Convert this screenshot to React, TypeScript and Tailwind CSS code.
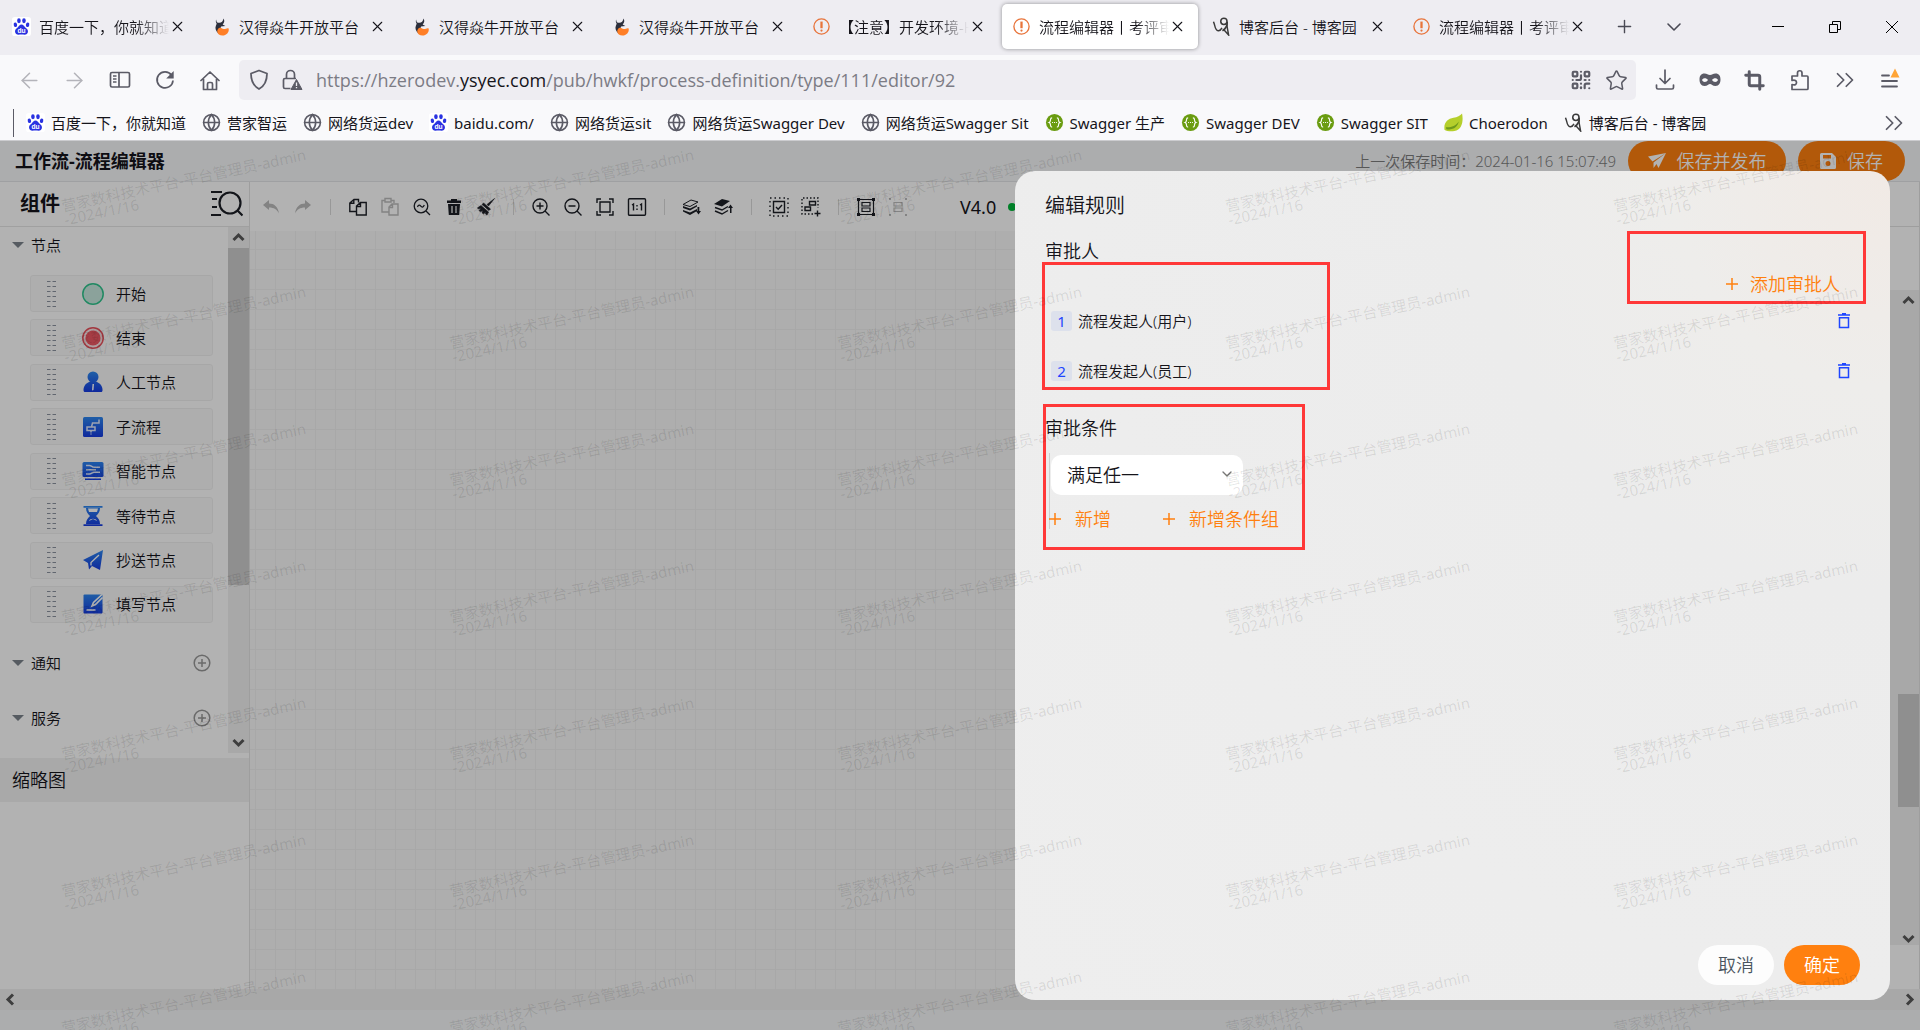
import React, { useState } from "react";
import {
  ArrowLeft,
  ArrowRight,
  ChevronDown,
  ChevronsRight,
  Crop,
  Globe,
  Plus,
  QrCode,
  Star,
  X,
} from "lucide-react";

type IconProps = { className?: string };

const BaiduIcon = () => (
  <svg viewBox="0 0 20 20" className="w-[19px] h-[19px] shrink-0">
    <rect width="20" height="20" rx="3" fill="#fff" />
    <g fill="#2932e1">
      <ellipse cx="7.3" cy="4" rx="1.9" ry="2.6" />
      <ellipse cx="12.6" cy="4" rx="1.9" ry="2.6" />
      <ellipse cx="3.6" cy="8.2" rx="1.8" ry="2.4" transform="rotate(-12 3.6 8.2)" />
      <ellipse cx="16.4" cy="8.2" rx="1.8" ry="2.4" transform="rotate(12 16.4 8.2)" />
      <path d="M10 8c2 0 2.600 1.600 3.800 2.800 1.400 1.300 3.200 2.200 3 4.700-.2 2.200-1.800 3.100-3.600 3.100-1.200 0-2-.2-3.200-.2s-2 .2-3.200.2c-1.800 0-3.400-.9-3.600-3.100-.2-2.500 1.600-3.400 3-4.700C7.400 9.600 8 8 10 8z" />
    </g>
    <text x="10" y="17" textAnchor="middle" fontSize="7" fontWeight="700" fill="#fff" fontFamily="Liberation Sans, sans-serif">
      du
    </text>
  </svg>
);

const BullIcon = () => (
  <svg viewBox="0 0 20 20" className="w-[19px] h-[19px] shrink-0">
    <path d="M4.500 2.500c-.2 2.500 1 3.600 3.200 3.500C10 5.800 11.800 4.500 12 1.500c1.500 2 1.200 4.500-.8 6.300l2.800 1.700-4.500.5L7 17.500C4 15 3 12 4 9.500c.4-1 1-1.800.8-2.800C4 5.500 3.700 4 4.500 2.500z" fill="#2b2f3c" />
    <path d="M7.500 11.500c1.500-1 3 .8 4.700 1.200 2 .4 3.500-1.700 5.300-.7 1 3.800-2.500 7.500-6.500 7.500-3 0-5.200-1.700-5.500-4.200-.1-1.800.8-3.200 2-3.800z" fill="#ff7f27" />
  </svg>
);

const AlertIcon = () => (
  <svg viewBox="0 0 20 20" className="w-[19px] h-[19px] shrink-0" fill="none" stroke="#e8743b">
    <circle cx="10" cy="10" r="8" strokeWidth="1.400" />
    <path d="M10 4.800v7" strokeWidth="2.400" />
    <circle cx="10" cy="14.300" r="1.200" fill="#e8743b" stroke="none" />
  </svg>
);

const BlogIcon = () => (
  <svg viewBox="0 0 20 20" className="w-[19px] h-[19px] shrink-0" fill="none" stroke="#3a3a3a">
    <circle cx="12.500" cy="4.500" r="3.300" strokeWidth="1.600" />
    <path d="M16 5c.4 4-1 7-5 9.500" strokeWidth="1.700" />
    <path d="M15.500 8l2 11-5-5.500" strokeWidth="1.500" />
    <path d="M1.500 5c2 3 1 9 5 9.500 2 .2 3-1 4-3" strokeWidth="1.500" />
  </svg>
);

const SwaggerIcon = () => (
  <svg viewBox="0 0 20 20" className="w-[19px] h-[19px] shrink-0">
    <circle cx="10" cy="10" r="9" fill="#6a9c10" />
    <path d="M7.500 5.200c-1.600 0-1.700.7-1.700 2 0 1.500 0 2.300-1.500 2.800 1.500.5 1.500 1.300 1.500 2.800 0 1.300.1 2 1.700 2M12.500 5.200c1.600 0 1.700.7 1.700 2 0 1.500 0 2.300 1.500 2.800-1.500.5-1.500 1.300-1.500 2.800 0 1.300-.1 2-1.700 2" fill="none" stroke="#fff" strokeWidth="1.200" />
    <path d="M7.500 10h1M9.500 10h1M11.500 10h1" stroke="#fff" strokeWidth="1.200" />
  </svg>
);

const LeafIcon = () => (
  <svg viewBox="0 0 20 20" className="w-[19px] h-[19px] shrink-0">
    <path d="M19 .5c1.500 7 .5 17-8 18.500-4 .8-8.500 0-10.500-1.500C-.5 10 4 6 10 5c4-.6 7-2 9-4.500z" fill="#b5cf2b" />
    <path d="M2 15c5 .5 10-1 13.500-6-1 6-6.500 9.500-13 8z" fill="#6f9a1c" />
  </svg>
);

const WorldIcon = () => <Globe size={19} strokeWidth={2} className="shrink-0 text-[#5b5b66]" />;

const tabs = [
  { icon: BaiduIcon, title: "百度一下，你就知道", fade: true },
  { icon: BullIcon, title: "汉得焱牛开放平台" },
  { icon: BullIcon, title: "汉得焱牛开放平台" },
  { icon: BullIcon, title: "汉得焱牛开放平台" },
  { icon: AlertIcon, title: "【注意】开发环境-H", fade: true },
  { icon: AlertIcon, title: "流程编辑器丨考评审批", fade: true, active: true },
  { icon: BlogIcon, title: "博客后台 - 博客园" },
  { icon: AlertIcon, title: "流程编辑器丨考评审批", fade: true },
];

const bookmarks = [
  { icon: BaiduIcon, title: "百度一下，你就知道" },
  { icon: WorldIcon, title: "营家智运" },
  { icon: WorldIcon, title: "网络货运dev" },
  { icon: BaiduIcon, title: "baidu.com/" },
  { icon: WorldIcon, title: "网络货运sit" },
  { icon: WorldIcon, title: "网络货运Swagger Dev" },
  { icon: WorldIcon, title: "网络货运Swagger Sit" },
  { icon: SwaggerIcon, title: "Swagger 生产" },
  { icon: SwaggerIcon, title: "Swagger DEV" },
  { icon: SwaggerIcon, title: "Swagger SIT" },
  { icon: LeafIcon, title: "Choerodon" },
  { icon: BlogIcon, title: "博客后台 - 博客园" },
];

const TabBar = () => (
  <div className="flex h-[55px] bg-[#eeedf2] pt-1 pb-[6px]">
    {tabs.map((tab, i) => (
      <div key={i} className="w-[200px] px-[2px] shrink">
        <div
          className={
            tab.active
              ? "flex items-center h-full pl-[10px] pr-3 rounded-[5px] bg-white shadow-[0_0_4px_rgba(0,0,0,0.4)]"
              : "flex items-center h-full pl-[10px] pr-3"
          }
        >
          <tab.icon />
          <span
            className={
              tab.fade
                ? "ml-2 flex-1 overflow-hidden whitespace-nowrap [mask-image:linear-gradient(to_right,black_75%,transparent)]"
                : "ml-2 flex-1 overflow-hidden whitespace-nowrap"
            }
          >
            {tab.title}
          </span>
          <button aria-label="关闭标签页" className="shrink-0">
            <X size={17} strokeWidth={1.500} />
          </button>
        </div>
      </div>
    ))}
    <div className="flex flex-1 items-center text-[#4a4a55]">
      <button aria-label="新标签页" className="w-12 flex justify-center">
        <Plus size={21} strokeWidth={1.600} />
      </button>
      <button aria-label="标签列表" className="w-[52px] flex justify-center">
        <ChevronDown size={24} strokeWidth={1.600} />
      </button>
    </div>
    <div className="flex items-center text-black">
      <button aria-label="最小化" className="w-[57px] flex justify-center">
        <svg width="14" height="14" stroke="currentColor"><path d="M1 6.500h12" /></svg>
      </button>
      <button aria-label="还原" className="w-[57px] flex justify-center">
        <svg width="14" height="14" stroke="currentColor" fill="none">
          <path d="M1.500 4.500h8v8h-8zM4.500 4.500v-3h8v8h-3" />
        </svg>
      </button>
      <button aria-label="关闭" className="w-[57px] flex justify-center">
        <svg width="14" height="14" stroke="currentColor"><path d="M1 1l12 12M13 1L1 13" /></svg>
      </button>
    </div>
  </div>
);

const NavButton = ({ label, children }: { label: string; children: React.ReactNode }) => (
  <button aria-label={label} className="w-[45px] flex justify-center shrink-0">
    {children}
  </button>
);

const NavBar = () => (
  <div className="flex items-center h-[50px] bg-[#f9f9fb] pl-[7px] pr-2 text-[#5b5b66]">
    <div className="flex text-[#b4b4ba]">
      <NavButton label="后退"><ArrowLeft size={25} strokeWidth={1.500} /></NavButton>
      <NavButton label="前进"><ArrowRight size={25} strokeWidth={1.500} /></NavButton>
    </div>
    <NavButton label="侧栏">
      <svg width="22" height="20" viewBox="0 0 22 20" fill="none" stroke="currentColor" strokeWidth="1.700">
        <rect x="1.500" y="2.500" width="19" height="14.500" rx="1.500" />
        <path d="M10 2.500V17M4 6h3.500M4 9h3.500M4 12h3.500" />
      </svg>
    </NavButton>
    <NavButton label="刷新">
      <svg width="20" height="20" viewBox="0 0 20 20" fill="none" stroke="currentColor" strokeWidth="1.700">
        <path d="M16.500 5.200A8 8 0 1 0 18 10.500" />
        <path d="M18.700 1v7.500h-7.500z" fill="currentColor" stroke="none" />
      </svg>
    </NavButton>
    <NavButton label="主页">
      <svg width="20" height="21" viewBox="0 0 20 21" fill="none" stroke="currentColor" strokeWidth="1.700" strokeLinejoin="round" strokeLinecap="round">
        <path d="M1 10.500L10 2l9 8.500M3.500 9v10.500h13V9M7.500 19v-5a1.500 1.500 0 0 1 1.500-1.500h2a1.500 1.500 0 0 1 1.500 1.500v5" />
      </svg>
    </NavButton>
    <div className="flex flex-1 items-center h-10 ml-[7px] mr-[6px] rounded-[5px] bg-[#eeedf2] pl-[10px] pr-2">
      <svg width="20" height="22" viewBox="0 0 20 22" fill="none" stroke="currentColor" strokeWidth="1.800" strokeLinejoin="round">
        <path d="M10 1.500l8 3c0 7-1.500 12-8 15.500C3.500 16.500 2 11.500 2 4.500z" />
      </svg>
      <svg width="22" height="22" viewBox="0 0 22 22" fill="none" stroke="currentColor" strokeWidth="1.700" className="ml-3">
        <path d="M5.500 9V5.500a4 4 0 0 1 8 0V9M9.500 19.500H4A1.500 1.500 0 0 1 2.500 18v-7A1.500 1.500 0 0 1 4 9.500h11" />
        <path d="M15.500 10.500l5.500 10H10z" fill="currentColor" stroke="currentColor" strokeLinejoin="round" strokeWidth="1" />
        <path d="M15.500 13.500v3.500M15.500 18v1.300" stroke="#eeedf2" strokeWidth="1.300" />
      </svg>
      <div className="flex-1 ml-[13px] font-['Open_Sans','Noto_Sans_CJK_SC',sans-serif] font-normal text-lg text-[#7c7c85]">
        https://hzerodev.<span className="text-[#15141a]">ysyec.com</span>/pub/hwkf/process-definition/type/111/editor/92
      </div>
      <QrCode size={22} strokeWidth={2.400} />
      <Star size={23} strokeWidth={1.600} className="ml-[13px]" />
    </div>
    <NavButton label="下载">
      <svg width="20" height="22" viewBox="0 0 20 22" fill="none" stroke="currentColor" strokeWidth="1.700" strokeLinecap="round" strokeLinejoin="round">
        <path d="M10 1v13M5 9.500l5 5 5-5M1.500 16v2.500A1.500 1.500 0 0 0 3 20h14a1.500 1.500 0 0 0 1.500-1.500V16" />
      </svg>
    </NavButton>
    <NavButton label="隐私">
      <svg width="22" height="14" viewBox="0 0 22 14">
        <path fillRule="evenodd" fill="currentColor" d="M5.500.5c2.500 0 3.500 1.500 5.500 1.500S14 .5 16.500.5C20 .5 21.500 3 21.500 6.500S20 13 16.500 13c-3 0-4-2-5.500-2s-2.500 2-5.500 2C2 13 .5 10 .5 6.500S2 .5 5.500.5zM3 7c1 2.500 4.500 2.500 6 0C7.500 4.500 4 4.500 3 7zm10 0c1.500 2.500 5 2.500 6 0-1-2.500-4.500-2.500-6 0z" />
      </svg>
    </NavButton>
    <NavButton label="截图"><Crop size={21} strokeWidth={3.400} /></NavButton>
    <NavButton label="扩展">
      <svg width="20" height="22" viewBox="0 0 20 22" fill="none" stroke="currentColor" strokeWidth="1.700" strokeLinejoin="round">
        <path d="M2 20.500v-5c3.500 1 4.500-.5 4.500-2S5 10.500 2 11.500V7h5.500V4a2.200 2.200 0 0 1 4.500 0v3H17a1 1 0 0 1 1 1v11.500a1 1 0 0 1-1 1z" />
      </svg>
    </NavButton>
    <NavButton label="更多工具"><ChevronsRight size={30} strokeWidth={1.400} /></NavButton>
    <NavButton label="菜单">
      <svg width="22" height="24" viewBox="0 0 22 24" fill="none" stroke="currentColor" strokeWidth="1.800" strokeLinecap="round">
        <path d="M3 7.500h7M3 13h15M3 18.500h15" />
        <path d="M16 .5l4.500 9h-9z" fill="#ffa436" stroke="none" />
      </svg>
    </NavButton>
  </div>
);

const BookmarkBar = () => (
  <div className="flex items-center h-9 bg-[#f9f9fb] border-b border-[#cccccf] pl-[13px] pr-[11px]">
    <div className="w-px h-7 bg-[#5b5b66] mr-3" />
    <nav className="flex flex-1 gap-4 font-normal">
      {bookmarks.map((item, i) => (
        <a key={i} href="#" className="flex items-center gap-[6px] whitespace-nowrap">
          <item.icon />
          {item.title}
        </a>
      ))}
    </nav>
    <ChevronsRight size={30} strokeWidth={1.400} className="text-[#5b5b66]" />
  </div>
);

const PageHeader = () => (
  <header className="flex items-center h-[41px] border-b border-[#e4e6e8] px-[15px]">
    <h1 className="flex-1 text-lg font-bold">工作流-流程编辑器</h1>
    <span className="text-[#7d7d7d]">上一次保存时间：2024-01-16 15:07:49</span>
    <button className="flex items-center justify-center gap-[11px] w-[158px] h-10 ml-3 rounded-full bg-[#ff800f] text-lg text-white">
      <svg width="18" height="16" viewBox="0 0 18 16" fill="currentColor">
        <path d="M0 3.500L18 0 4.500 8.500zM5.500 9.500L18 0l-7.500 15-2-4-3 4z" />
      </svg>
      保存并发布
    </button>
    <button className="flex items-center justify-center gap-[11px] w-[107px] h-10 ml-3 rounded-full bg-[#ff800f] text-lg text-white">
      <svg width="16" height="16" viewBox="0 0 16 16" fill="currentColor" fillRule="evenodd">
        <path d="M1.500 0H12l4 4v10.500a1.500 1.500 0 0 1-1.500 1.500h-13A1.500 1.500 0 0 1 0 14.500v-13A1.500 1.500 0 0 1 1.500 0zM3 2v3.500h8V2zm5 6a2.500 2.500 0 1 0 0 5 2.500 2.500 0 0 0 0-5z" />
      </svg>
      保存
    </button>
  </header>
);

const StartIcon = () => (
  <svg width="22" height="22" viewBox="0 0 22 22">
    <circle cx="11" cy="11" r="10.200" fill="#c8e9de" stroke="#2fc48d" strokeWidth="1.500" />
  </svg>
);

const EndIcon = () => (
  <svg width="22" height="22" viewBox="0 0 22 22">
    <circle cx="11" cy="11" r="10.200" fill="#fbe4e6" stroke="#e8505b" strokeWidth="1.500" />
    <circle cx="11" cy="11" r="7.600" fill="#ee5864" />
  </svg>
);

const BlueIcon = ({ children }: { children: React.ReactNode }) => (
  <svg width="22" height="22" viewBox="0 0 22 22" fill="url(#blue)">
    <defs>
      <linearGradient id="blue" x1="0" y1="0" x2="0" y2="22" gradientUnits="userSpaceOnUse">
        <stop offset="0" stopColor="#2e8bf0" />
        <stop offset="1" stopColor="#1537e0" />
      </linearGradient>
    </defs>
    {children}
  </svg>
);

const nodes = [
  { title: "开始", icon: <StartIcon /> },
  { title: "结束", icon: <EndIcon /> },
  {
    title: "人工节点",
    icon: (
      <BlueIcon>
        <circle cx="11" cy="6" r="5.500" />
        <path d="M8 10.500h6c4 1.500 6.500 4.500 6.500 8.500 0 1.500-.5 2-1.500 2H3c-1 0-1.500-.5-1.500-2 0-4 2.500-7 6.500-8.500z" />
        <path d="M10.500 13h1.500l-.5 6-1.500.5z" fill="#fff" />
      </BlueIcon>
    ),
  },
  {
    title: "子流程",
    icon: (
      <BlueIcon>
        <rect x="1" y="1" width="20" height="20" rx="1.500" />
        <path d="M17 3.500V7h-6.500l-1 4M5 11h8v3.500H5zM9 15v1.500M9 17.500v1" fill="none" stroke="#dfe9ff" strokeWidth="1.500" />
      </BlueIcon>
    ),
  },
  {
    title: "智能节点",
    icon: (
      <BlueIcon>
        <rect x="0.500" y="2" width="21" height="15" rx="1.500" />
        <path d="M3 18.500h16v1.500H3z" />
        <path d="M4 5.500h3.500c2 0 2.500 1.800 4.500 1.800h6M4 9.700h10M4 14h3.500c2 0 2.500-1.800 4.500-1.800h6" fill="none" stroke="#dfe9ff" strokeWidth="1.500" />
      </BlueIcon>
    ),
  },
  {
    title: "等待节点",
    icon: (
      <BlueIcon>
        <path d="M1.500 1h19v1.800h-19zM1.500 19.200h19V21h-19z" />
        <path d="M4 3h14c0 4-2 6-4 8 2 2 4 4 4 8H4c0-4 2-6 4-8-2-2-4-4-4-8z" />
        <path d="M6 3.500h10l-1 3.500H7zM7 16c1-3 7-3 8 0l-4-2z" fill="#fff" />
      </BlueIcon>
    ),
  },
  {
    title: "抄送节点",
    icon: (
      <BlueIcon>
        <path d="M21 1L1 11l5 3 1 6.500 3-3.500 8 4z" />
        <path d="M17 6l-8 7.500v3" fill="none" stroke="#fff" strokeWidth="1.300" />
      </BlueIcon>
    ),
  },
  {
    title: "填写节点",
    icon: (
      <BlueIcon>
        <rect x="1.500" y="1.500" width="19" height="19" rx="1" />
        <path d="M20 1.500l-8.500 8-1.500 3.500 3.500-1.500 7-7M4.500 17h9" fill="none" stroke="#fff" strokeWidth="1.600" />
      </BlueIcon>
    ),
  },
];

const ScrollArrow = ({ className = "" }: IconProps) => (
  <svg width="13" height="13" viewBox="0 0 13 13" fill="none" stroke="#5a5a5a" strokeWidth="3" className={className}>
    <path d="M1.500 9l5-5 5 5" />
  </svg>
);

const GroupTitle = ({ title }: { title: string }) => (
  <button className="flex items-center text-left">
    <span className="border-x-[6px] border-t-[6px] border-x-transparent border-t-[#7b838c] mr-[7px]" />
    {title}
  </button>
);

const AddIcon = () => (
  <button aria-label="添加">
    <svg width="18" height="18" viewBox="0 0 18 18" fill="none" stroke="#999" strokeWidth="1.500">
      <circle cx="9" cy="9" r="7.800" />
      <path d="M9 5v8M5 9h8" />
    </svg>
  </button>
);

const Sidebar = () => (
  <aside className="flex flex-col w-[250px] shrink-0 border-r border-[#e2e2e2] bg-white">
    <div className="flex items-center justify-between h-[45px] border-b border-[#e6e6e6] pl-5 pr-[6px]">
      <h2 className="text-xl leading-7 font-bold">组件</h2>
      <button aria-label="搜索组件">
        <svg width="32" height="28" viewBox="0 0 32 28" fill="none" stroke="#1c1f26" strokeWidth="2.200">
          <circle cx="19" cy="13" r="10.500" />
          <path d="M26.500 20.500l5 5M0 2h11M1 9h5M1 17h5M0 25h10" />
        </svg>
      </button>
    </div>
    <div className="flex">
      <div className="flex-1 pb-[13px]">
        <div className="flex items-center h-9 pl-3">
          <GroupTitle title="节点" />
        </div>
        <div className="flex flex-col justify-between h-[348px] my-3 ml-[30px] mr-[15px]">
          {nodes.map((node) => (
            <div key={node.title} className="flex items-center h-[37px] rounded-[3px] border border-[#f0f0f0] bg-[#fafafa] pl-4">
              <svg width="9" height="26" viewBox="0 0 9 26" stroke="#8b93a0" strokeWidth="1" className="mr-[26px]">
                <path d="M0 .5h9M0 5.500h9M0 10.500h9M0 15.500h9M0 20.500h9M0 25.500h9" strokeDasharray="3.500 2" />
              </svg>
              {node.icon}
              <span className="ml-3">{node.title}</span>
            </div>
          ))}
        </div>
        {["通知", "服务"].map((title) => (
          <div key={title} className="flex items-center justify-between h-[55px] pl-3 pr-[17px]">
            <GroupTitle title={title} />
            <AddIcon />
          </div>
        ))}
      </div>
      <div className="flex flex-col items-center w-[21px] mb-[5px] bg-[#f1f1f1]">
        <ScrollArrow className="my-1" />
        <div className="w-full h-[64%] bg-[#cdcdcd]" />
        <ScrollArrow className="mt-auto mb-1 rotate-180" />
      </div>
    </div>
    <h3 className="h-11 bg-[#f2f2f2] pl-3 text-lg leading-[44px]">缩略图</h3>
  </aside>
);

const ToolIcon = ({ label, muted, children }: { label: string; muted?: boolean; children: React.ReactNode }) => (
  <button aria-label={label} className={muted ? "w-8 flex justify-center text-[#bcbcbc]" : "w-8 flex justify-center text-[#1c1f26]"}>
    <svg width="20" height="20" viewBox="0 0 20 20" fill="none" stroke="currentColor" strokeWidth="1.400">
      {children}
    </svg>
  </button>
);

const Divider = () => <span className="w-px h-4 mx-[11px] bg-[#dadada]" />;

const Toolbar = () => (
  <div className="flex items-center h-[49px] bg-white pl-[5px]">
    <ToolIcon label="撤销" muted>
      <path d="M2 8l6-5v3.500c5 0 9 3 10 10-2-4-5-6-10-6V13z" fill="currentColor" stroke="none" />
    </ToolIcon>
    <ToolIcon label="重做" muted>
      <path d="M18 8l-6-5v3.500c-5 0-9 3-10 10 2-4 5-6 10-6V13z" fill="currentColor" stroke="none" />
    </ToolIcon>
    <Divider />
    <ToolIcon label="复制">
      <path d="M8 14.500H1.800V6L6 2.500h4.500v3M5.800 2.500V6.300H2M8.500 18V9l4-3.500h5.700V18zM12.500 5.500v4H9" />
    </ToolIcon>
    <ToolIcon label="粘贴" muted>
      <path d="M8.500 15H2V3.500h3M11 3.500h3V6M5 1.500h6v3.500H5zM9 18V10l3-3h6v11zM12.500 7.500v3H9.500" />
    </ToolIcon>
    <ToolIcon label="查找">
      <circle cx="9" cy="9" r="6.800" strokeWidth="1.300" />
      <path d="M14 14l4 4M5.500 10c1-2.500 2.300-2 3.300-.8s2.300 1.500 3.500-1.200" strokeWidth="1.300" />
    </ToolIcon>
    <ToolIcon label="删除">
      <path d="M3 3.500h4V2h6v1.500h4V6H3zM4 7h12l-.8 11H4.800z" fill="currentColor" stroke="none" />
      <path d="M8 9v7M12 9v7" stroke="#fff" strokeWidth="1.200" />
    </ToolIcon>
    <ToolIcon label="清空">
      <path d="M18.500 1.500L11 7.500l1.500 1.500zM7.500 6l7 6-1.500 1.500L6 7.500zM5 8.500l7.500 6.500-1.500 3-1.500-1 .2-2L7.500 17 6 15.800l1-2.300-2.500 1.300L3 13.500l2-2-3 .3-.5-1z" fill="currentColor" strokeWidth=".6" />
    </ToolIcon>
    <Divider />
    <ToolIcon label="放大">
      <circle cx="9" cy="9" r="7" />
      <path d="M14 14l4.500 4.500M9 5.500v7M5.500 9h7" />
    </ToolIcon>
    <ToolIcon label="缩小">
      <circle cx="9" cy="9" r="7" />
      <path d="M14 14l4.500 4.500M5.500 9h7" />
    </ToolIcon>
    <ToolIcon label="适应画布">
      <path d="M2 6V2h4M14 2h4v4M18 14v4h-4M6 18H2v-4M5 5h10v10H5z" />
    </ToolIcon>
    <ToolIcon label="实际尺寸">
      <rect x="1.500" y="1.800" width="17" height="16.500" rx="1" />
      <path d="M5 8l1.500-1v6.500M13 8l1.500-1v6.500M10 8v1.500M10 11.500V13" />
    </ToolIcon>
    <Divider />
    <ToolIcon label="后置">
      <path d="M1 7.500L9 3l7 2-8 4.500z" strokeWidth="1" />
      <path d="M1 9l7 2.500L15 8v1.500l-7 4L1 11zM1 13l7 2.500L15 12v2l-7 4-7-3.500zM15.500 10h1.800v4h1.700l-2.500 3.500L14 14h1.500z" fill="currentColor" stroke="none" />
    </ToolIcon>
    <ToolIcon label="前置">
      <path d="M0 7l8-5 8 2-8 5.500zM16 16h1.500v-5H19l-2.500-3.500L14 11h2z" fill="currentColor" stroke="none" />
      <path d="M1 10.500l7 2.500 6-3.500M1 14l7 3 6-3.500" />
    </ToolIcon>
    <Divider />
    <ToolIcon label="框选">
      <path d="M1 1h18v18H1z" strokeDasharray="1.500 3" />
      <path d="M4.500 4.500h11v11h-11zM7 10l2.200 2.200L13 8" />
    </ToolIcon>
    <ToolIcon label="成组">
      <path d="M12 17H1V1h16v10" strokeDasharray="1.500 2" />
      <path d="M8.500 4.500h6v3.500h-6zM4 10h5.500v3.500H4zM16.500 13.500v6M13.500 16.500h6" />
    </ToolIcon>
    <Divider />
    <ToolIcon label="组合">
      <path d="M2.500 2.500h15v15h-15zM6 5.500h8v3.500H6zM6 11h8v3.500H6z" strokeWidth="1.200" />
      <path d="M1 1h3v3H1zM16 1h3v3h-3zM1 16h3v3H1zM16 16h3v3h-3z" fill="currentColor" stroke="none" />
    </ToolIcon>
    <ToolIcon label="取消组合" muted>
      <path d="M6 5.500h8v3.500H6zM6 11h8v3.500H6z" strokeWidth="1.200" />
      <path d="M1 1h2v2H1zM17 1h2v2h-2zM1 17h2v2H1zM17 17h2v2h-2z" fill="currentColor" stroke="none" />
    </ToolIcon>
    <span className="ml-[46px] text-lg leading-6 font-normal">V4.0</span>
    <span className="ml-3 w-2 h-2 rounded-full bg-[#00b83a]" />
  </div>
);

const Canvas = () => (
  <main className="flex flex-col flex-1">
    <Toolbar />
    <div className="flex-1 bg-[#f9f9f9] bg-[linear-gradient(#f1f1f1_1px,transparent_1px),linear-gradient(to_right,#f1f1f1_1px,transparent_1px)] bg-size-[20px_20px] bg-position-[5px_18px]" />
  </main>
);

const PropertyPanel = () => (
  <aside className="flex flex-col w-[350px] shrink-0 border-r border-[#e2e2e2] bg-white">
    <div className="h-[45px] border-b border-[#e2e2e2]" />
    <div className="h-[63px]" />
    <div className="flex flex-1 justify-end bg-[#f1f1f1]">
      <div className="flex flex-col items-center w-[21px]">
        <ScrollArrow className="mt-1" />
        <div className="w-full h-[113px] mt-[387px] bg-[#cdcdcd]" />
        <ScrollArrow className="mt-auto rotate-180" />
      </div>
    </div>
    <div className="h-11" />
  </aside>
);

// repeated user / date stamp across the whole page
const Watermark = () => (
  <div
    aria-hidden="true"
    className="absolute inset-0 overflow-hidden pointer-events-none grid grid-cols-[repeat(5,388px)] auto-rows-[137px] pl-[60px] pt-[58px] font-normal text-black/10 leading-[14px]"
  >
    {Array.from({ length: 35 }, (_, i) => (
      <div key={i} className="origin-top-left -rotate-12 whitespace-nowrap">
        营家数科技术平台-平台管理员-admin
        <br />
        -2024/1/16
      </div>
    ))}
  </div>
);

const DeleteButton = () => (
  <button aria-label="删除" className="mr-[10px]">
    <svg width="12" height="16" viewBox="0 0 12 16" fill="none" stroke="#1e46ff" strokeWidth="1.500">
      <path d="M0 2h12M4 .8h4M1.500 4.800h9v9.700h-9z" />
    </svg>
  </button>
);

const PlusIcon = () => (
  <svg width="12" height="12" stroke="currentColor" strokeWidth="1.500">
    <path d="M6 0v12M0 6h12" />
  </svg>
);

const approvers = ["流程发起人(用户)", "流程发起人(员工)"];

const RuleModal = () => {
  const [condition, setCondition] = useState("any");

  return (
    <div
      role="dialog"
      aria-labelledby="rule-title"
      className="flex flex-col w-[875px] rounded-[20px] bg-[#eeeeee] bg-[radial-gradient(circle_at_100%_0%,#f1eae5_0%,#eeedeb_18%,#ececec_35%,#eeeeee_100%)] pt-5 pb-[15px] px-[30px]"
    >
      <h2 id="rule-title" className="text-xl leading-[30px]">编辑规则</h2>

      <section className="relative mt-[18px]">
        <h3 className="text-lg leading-6">审批人</h3>
        <div className="flex justify-end mt-[5px]">
          <button className="flex items-center gap-3 h-8 px-5 text-lg text-[#ff800f]">
            <PlusIcon />
            添加审批人
          </button>
        </div>
        <ol className="mt-[6px] flex flex-col gap-5">
          {approvers.map((name, i) => (
            <li key={name} className="flex items-center h-[30px] pl-[6px]">
              <span className="w-[21px] h-5 rounded-[3px] bg-[#dde1ec] text-center leading-5 font-normal text-[#1e46ff]">{i + 1}</span>
              <span className="flex-1 ml-[6px]">{name}</span>
              <DeleteButton />
            </li>
          ))}
        </ol>
        <div className="absolute -left-[3px] top-[23px] w-[288px] h-[128px] border-[3px] border-[#ff3838] pointer-events-none" />
        <div className="absolute -right-[6px] -top-2 w-[239px] h-[73px] border-[3px] border-[#ff3838] pointer-events-none" />
      </section>

      <section className="relative mt-[30px]">
        <h3 className="text-lg leading-6">审批条件</h3>
        <div className="mt-[13px] ml-1 pt-[2px] pl-px border-l border-[#cfcfcf]">
          <div className="relative w-[192px]">
            <select
              aria-label="审批条件"
              value={condition}
              onChange={(e) => setCondition(e.target.value)}
              className="appearance-none w-full h-10 rounded-[10px] bg-white pl-4 text-lg"
            >
              <option value="any">满足任一</option>
              <option value="all">满足全部</option>
            </select>
            <ChevronDown size={16} strokeWidth={2} className="absolute right-2 top-[11px] text-[#777] pointer-events-none" />
          </div>
          <div className="flex gap-[52px] -ml-[2px] mt-[14px] text-lg leading-5 text-[#ff800f]">
            <button className="flex items-center gap-[14px]">
              <PlusIcon />
              新增
            </button>
            <button className="flex items-center gap-[14px]">
              <PlusIcon />
              新增条件组
            </button>
          </div>
        </div>
        <div className="absolute -left-[2px] -top-3 w-[262px] h-[146px] border-[3px] border-[#ff3838] pointer-events-none" />
      </section>

      <div className="flex justify-end gap-[10px] mt-auto text-lg">
        <button className="h-10 px-5 rounded-full bg-[#fdfdfd] text-[#4a5560]">取消</button>
        <button className="h-10 px-5 rounded-full bg-[#ff800f] text-white">确定</button>
      </div>
    </div>
  );
};

const App = () => {
  return (
    <div className="flex flex-col min-h-screen font-['Noto_Sans','Noto_Sans_CJK_SC',sans-serif] font-[350] text-[15px] leading-5 text-[#15141a]">
      <TabBar />
      <NavBar />
      <BookmarkBar />
      <div className="relative flex flex-col flex-1 bg-[#f6f8fa] overflow-hidden">
        <PageHeader />
        <div className="flex flex-1">
          <Sidebar />
          <Canvas />
          <PropertyPanel />
        </div>
        <div className="flex items-center justify-between h-[21px] mb-5 bg-[#f1f1f1] px-1">
          <ScrollArrow className="-rotate-90" />
          <ScrollArrow className="rotate-90" />
        </div>

        <div className="absolute inset-0 flex justify-end bg-black/30 pt-[30px] pr-[30px] pb-[30px]">
          <RuleModal />
        </div>
        <Watermark />
      </div>
    </div>
  );
};

export default App;
